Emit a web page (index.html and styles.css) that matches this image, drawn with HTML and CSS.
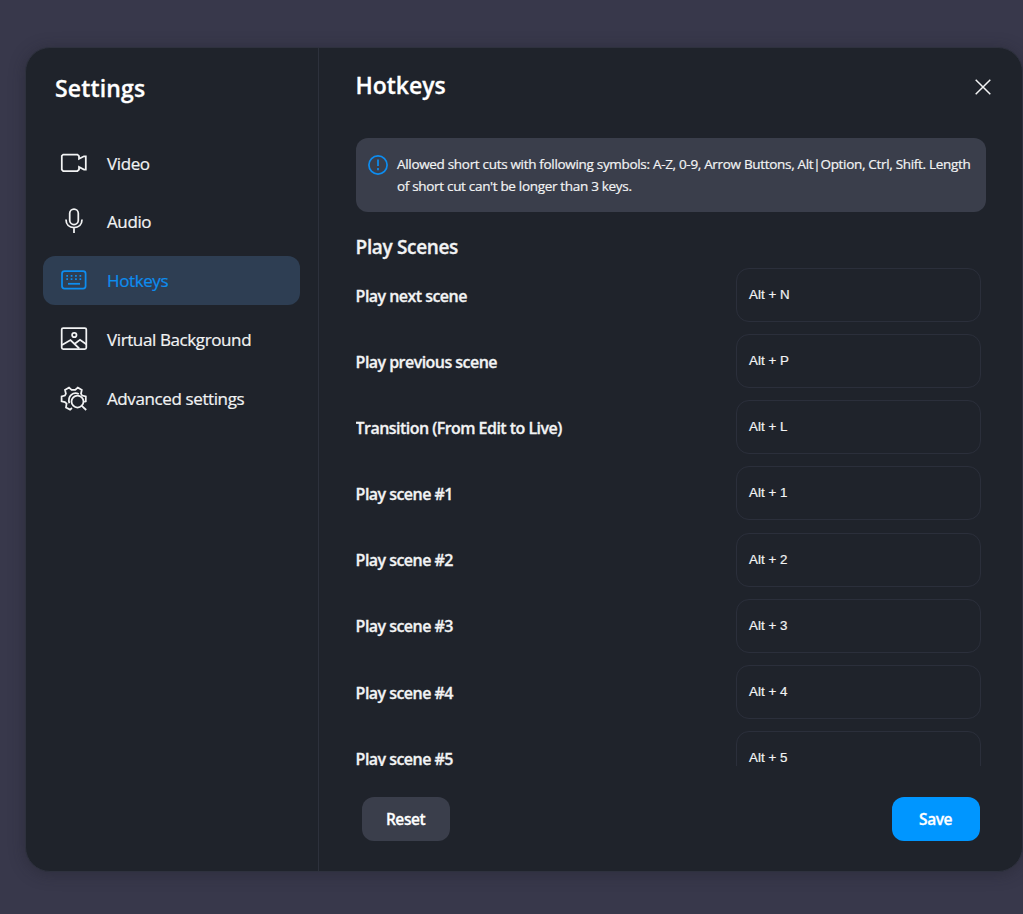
FILE: index.html
```html
<!DOCTYPE html>
<html lang="en">
  <head>
    <meta charset="UTF-8" />
    <meta name="viewport" content="width=device-width, initial-scale=1.0" />
    <title>Settings</title>
    <link rel="stylesheet" href="styles.css">
  </head>
  <body>
    <div class="modal">
      <aside class="sidebar">
        <h1 class="sidebar__title">Settings</h1>
        <nav class="menu">
          <a class="menu__item">
            <svg class="menu__icon" viewBox="0 0 28 28">
              <path d="M3.200 5.500h14.200l1.600 1.600v2.700l5-2.500h1.800v13.200H24l-5-2.500v2.600l-1.600 1.400H3.200l-1.400-1.400V6.900z" />
            </svg>
            <span>Video</span>
          </a>
          <a class="menu__item">
            <svg class="menu__icon" viewBox="0 0 28 28">
              <rect x="9.700" y="2" width="8.600" height="15.500" rx="4.300" />
              <path d="M6 12.500c0 5 3.200 8 8 8s8-3 8-8M14 20.500v5.500" />
            </svg>
            <span>Audio</span>
          </a>
          <a class="menu__item menu__item_active">
            <svg class="menu__icon" viewBox="0 0 28 28">
              <rect x="2" y="5" width="23.600" height="17.500" rx="2.500" />
              <path stroke-dasharray="1.700 2.700" d="M6.300 9.800h16M6.300 13h16" />
              <path d="M8 17.800h12" />
            </svg>
            <span>Hotkeys</span>
          </a>
          <a class="menu__item">
            <svg class="menu__icon" viewBox="0 0 28 28">
              <rect x="1.700" y="3" width="24.600" height="21" rx="1.500" />
              <circle cx="14.300" cy="10" r="2.200" />
              <path d="M2 20l8.500-5 8.700 8.500M14.800 18.700l5.200-3.900 6.300 4.500" />
            </svg>
            <span>Virtual Background</span>
          </a>
          <a class="menu__item">
            <svg class="menu__icon" viewBox="0 0 28 28">
              <path d="M12 24l-1.900 1.600-4.100-2.200.6-3.900-1.700-1.400-3.300-.8v-4.800l3.300-.9 1-1.900-.9-3.700 4-2.500 2.600 2.400h3.600l2.600-2.400 4 2.500-.8 3.700 1.200 1.900 3.600.9v4.800l-1.600.5" />
              <path d="M9.300 19.200c-2-7.300 4-11.700 9.500-9.200" />
              <circle cx="17.500" cy="17.500" r="6" />
              <path d="M21.800 21.800l4.400 4.200" />
            </svg>
            <span>Advanced settings</span>
          </a>
        </nav>
      </aside>

      <main class="content">
        <header class="content__header">
          <h2 class="content__title">Hotkeys</h2>
          <svg class="content__close" viewBox="0 0 18 18">
            <path d="M1.700 1.700l14.600 14.600M16.300 1.700L1.700 16.300" />
          </svg>
        </header>

        <div class="info">
          <svg class="info__icon" viewBox="0 0 20 20">
            <circle cx="10" cy="10" r="9.100" />
            <path d="M10 4.500v6.500M10 13v2.200" />
          </svg>
          <p class="info__text">
            <span class="info__line">Allowed short cuts with following symbols: A-Z, 0-9, Arrow Buttons, Alt|Option, Ctrl, Shift. Length</span>
            <span class="info__line">of short cut can't be longer than 3 keys.</span>
          </p>
        </div>

        <section class="scenes">
          <h3 class="scenes__title">Play Scenes</h3>
          <div class="row"><span class="row__label">Play next scene</span><div class="row__key">Alt + N</div></div>
          <div class="row"><span class="row__label">Play previous scene</span><div class="row__key">Alt + P</div></div>
          <div class="row"><span class="row__label">Transition (From Edit to Live)</span><div class="row__key">Alt + L</div></div>
          <div class="row"><span class="row__label">Play scene #1</span><div class="row__key">Alt + 1</div></div>
          <div class="row"><span class="row__label">Play scene #2</span><div class="row__key">Alt + 2</div></div>
          <div class="row"><span class="row__label">Play scene #3</span><div class="row__key">Alt + 3</div></div>
          <div class="row"><span class="row__label">Play scene #4</span><div class="row__key">Alt + 4</div></div>
          <div class="row"><span class="row__label">Play scene #5</span><div class="row__key">Alt + 5</div></div>
        </section>

        <footer class="actions">
          <button class="button" type="button">Reset</button>
          <button class="button button_primary" type="button">Save</button>
        </footer>
      </main>
    </div>
  </body>
</html>
```

FILE: styles.css
```css
* {
  box-sizing: border-box;
}

body {
  margin: 0;
  height: 914px;
  padding: 47px 0 0 25px;
  overflow: hidden;
  background: #38384b;
  color: #f2f3f4;
  font-family: "Open Sans", "Noto Sans", sans-serif;
}

h1, h2, h3, p {
  margin: 0;
}

h1, h2, h3, button, .row__label {
  -webkit-text-stroke: 0.3px currentColor;
}

svg {
  fill: none;
  stroke: currentColor;
  flex-shrink: 0;
}

.modal {
  display: flex;
  width: 998px;
  height: 825px;
  border: 1px solid #2e313e;
  border-radius: 25px;
  background: #1f232b;
  box-shadow: 0 2px 16px rgba(30, 30, 40, 0.4);
}

.sidebar {
  width: 293px;
  padding: 20px 18px 0 17px;
  border-right: 1px solid #2d313c;
}

.sidebar__title {
  padding-left: 12px;
  color: #fff;
  font-size: 23px;
  font-weight: 600;
  line-height: 40px;
  letter-spacing: 0.15px;
}

.menu {
  display: flex;
  flex-direction: column;
  gap: 9.8px;
  margin-top: 30px;
}

.menu__item {
  display: flex;
  align-items: center;
  gap: 19px;
  height: 49px;
  padding-left: 17px;
  border-radius: 12px;
  font-size: 17px;
  letter-spacing: -0.39px;
  white-space: nowrap;
  -webkit-text-stroke: 0.2px currentColor;
}

.menu__item span {
  padding-top: 1.4px;
}

.menu__item_active {
  background: #2e3e53;
  color: #0d8df0;
}

.menu__icon {
  width: 28px;
  height: 28px;
  stroke-width: 1.75;
}

.content {
  display: flex;
  flex-direction: column;
  flex: 1;
  min-width: 0;
  padding: 18px 30px 0 36.6px;
}

.content__header {
  display: flex;
  align-items: center;
  justify-content: space-between;
  height: 40px;
}

.content__title {
  padding-bottom: 2px;
  color: #fff;
  font-size: 23px;
  font-weight: 600;
  letter-spacing: -0.05px;
}

.content__close {
  width: 18px;
  height: 18px;
  margin-top: 1px;
  stroke-width: 1.5;
}

.info {
  display: flex;
  gap: 9.4px;
  width: 630px;
  height: 74px;
  margin-top: 32px;
  padding: 15px 0 0 12px;
  border-radius: 12px;
  background: #3a3e4b;
}

.info__icon {
  width: 20px;
  height: 20px;
  margin-top: 1.5px;
  color: #0d8df0;
  stroke-width: 1.7;
}

.info__text {
  font-size: 13.5px;
  line-height: 22px;
  white-space: nowrap;
  -webkit-text-stroke: 0.2px currentColor;
}

.info__line {
  display: block;
  letter-spacing: -0.315px;
}

.scenes {
  height: 538px;
  margin-top: 16px;
  overflow: hidden;
}

.scenes__title {
  height: 40px;
  font-size: 19px;
  font-weight: 600;
  line-height: 39px;
  letter-spacing: -0.35px;
}

.row {
  display: flex;
  align-items: center;
  justify-content: space-between;
  width: 625.4px;
  height: 54px;
  margin-bottom: 12.15px;
}

.row__label {
  padding-top: 1.5px;
  font-size: 16px;
  font-weight: 600;
  letter-spacing: -0.54px;
}

.row__key {
  width: 245px;
  height: 54px;
  padding-left: 12px;
  border: 1px solid #2b2f3b;
  border-radius: 13px;
  font-family: "Liberation Sans", Arial, sans-serif;
  font-size: 13.3px;
  line-height: 52.6px;
  letter-spacing: 0.05px;
  -webkit-text-stroke: 0.2px currentColor;
}

.actions {
  display: flex;
  justify-content: space-between;
  width: 618px;
  margin: 31px 0 0 6px;
}

.button {
  width: 88px;
  height: 44px;
  padding: 0;
  border: 0;
  border-radius: 12px;
  background: #3a3e4b;
  color: #fff;
  font: 600 15.5px "Open Sans", "Noto Sans", sans-serif;
  letter-spacing: -0.4px;
}

.button_primary {
  background: #0096ff;
}
```
